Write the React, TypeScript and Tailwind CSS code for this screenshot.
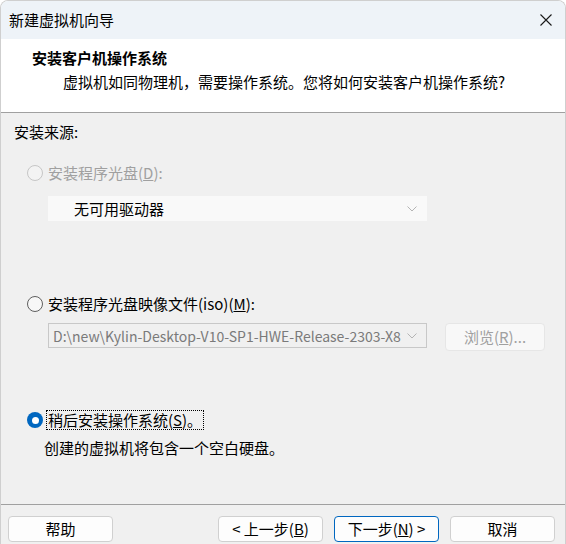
import React from 'react'

const FONT = "font-['Noto_Sans_CJK_SC','Noto_Sans',sans-serif]"

function Chevron() {
  return (
    <svg width="10" height="6" viewBox="0 0 10 6" className="shrink-0">
      <path d="M0.5 0.5 L5 5 L9.5 0.5" fill="none" stroke="#b4b4b4" strokeWidth="1" />
    </svg>
  )
}

function Radio({ state }: { state: 'disabled' | 'off' | 'on' }) {
  if (state === 'on')
    return (
      <span className="w-[16px] h-[16px] rounded-full bg-[#0067c0] flex items-center justify-center shrink-0">
        <span className="w-[7px] h-[7px] rounded-full bg-white" />
      </span>
    )
  return (
    <span
      className={`w-[16px] h-[16px] rounded-full shrink-0 border ${state === 'disabled' ? 'border-[#c6c6c6] bg-[#f3f3f3]' : 'border-[#5f5f5f] bg-[#f7f7f7]'}`}
    />
  )
}

function Btn({ children, primary }: { children: React.ReactNode; primary?: boolean }) {
  return (
    <button
      className={`w-[105px] h-[26px] rounded-[4px] bg-[#fdfdfd] text-[15px] leading-[24px] text-black flex items-center justify-center border ${primary ? 'border-[#0067c0]' : 'border-[#d0d0d0]'}`}
    >
      {children}
    </button>
  )
}

export default function App() {
  return (
    <div className={`w-[566px] h-[544px] bg-white ${FONT}`}>
      <div className="w-full h-full flex flex-col rounded-t-[8px] border border-b-0 border-[#cfcfcf] overflow-hidden">
        {/* title bar */}
        <div className="h-[38px] shrink-0 bg-[#eef3f8] flex items-center justify-between pl-[8px] pr-[13px]">
          <span className="text-[15px] text-black leading-[24px]">新建虚拟机向导</span>
          <svg width="12" height="12" viewBox="0 0 12 12">
            <path d="M0.5 0.5 L11.5 11.5 M11.5 0.5 L0.5 11.5" stroke="#1a1a1a" strokeWidth="1.1" />
          </svg>
        </div>

        {/* header */}
        <div className="h-[74px] shrink-0 bg-white border-b border-[#a0a0a0] pt-[7px] pl-[31px] text-[15px] leading-[24px] text-black">
          <div className="font-bold">安装客户机操作系统</div>
          <div className="pl-[31px]">虚拟机如同物理机，需要操作系统。您将如何安装客户机操作系统?</div>
        </div>

        {/* body */}
        <div className="flex-1 bg-[#f0f0f0] border-b border-[#a0a0a0] text-[15px] leading-[24px] text-black flex flex-col">
          <div className="pl-[13px] mt-[7px]">安装来源:</div>

          <div className="flex items-center pl-[26px] mt-[17px] text-[#a0a0a0]">
            <Radio state="disabled" />
            <span className="ml-[5px]">安装程序光盘(<u>D</u>):</span>
          </div>
          <div className="ml-[47px] mt-[11px] w-[379px] h-[25px] bg-[#f9f9f9] flex items-center justify-between pl-[26px] pr-[10px]">
            <span>无可用驱动器</span>
            <Chevron />
          </div>

          <div className="flex items-center pl-[26px] mt-[71px]">
            <Radio state="off" />
            <span className="ml-[5px]">安装程序光盘映像文件(iso)(<u>M</u>):</span>
          </div>
          <div className="flex items-start mt-[7px] pl-[47px]">
            <div className="w-[379px] h-[25px] border border-[#c8c8c8] bg-[#f0f0f0] flex items-center pl-[4px] pr-[9px] gap-[6px]">
              <span className="flex-1 overflow-hidden whitespace-nowrap text-[#7a7a7a] text-[14px] leading-[22px]">
                D:\new\Kylin-Desktop-V10-SP1-HWE-Release-2303-X8
              </span>
              <Chevron />
            </div>
            <div className="ml-[18px] w-[100px] h-[28px] rounded-[4px] border border-[#e6e6e6] bg-[#f8f8f8] text-[#a0a0a0] flex items-center justify-center">
              浏览(<u>R</u>)...
            </div>
          </div>

          <div className="flex items-center pl-[26px] mt-[59px]">
            <Radio state="on" />
            <span className="ml-[3px] px-[1px] border border-dotted border-black leading-[18px]">
              稍后安装操作系统(<u>S</u>)。
            </span>
          </div>
          <div className="pl-[43px] mt-[6px]">创建的虚拟机将包含一个空白硬盘。</div>
        </div>

        {/* footer */}
        <div className="h-[39px] shrink-0 bg-[#f0f0f0] flex items-start pt-[11px] pl-[7px] pr-[10px]">
          <Btn>帮助</Btn>
          <div className="flex-1" />
          <div className="flex gap-[11px]">
            <Btn>&lt; 上一步(<u>B</u>)</Btn>
            <Btn primary>下一步(<u>N</u>) &gt;</Btn>
            <Btn>取消</Btn>
          </div>
        </div>
      </div>
    </div>
  )
}
